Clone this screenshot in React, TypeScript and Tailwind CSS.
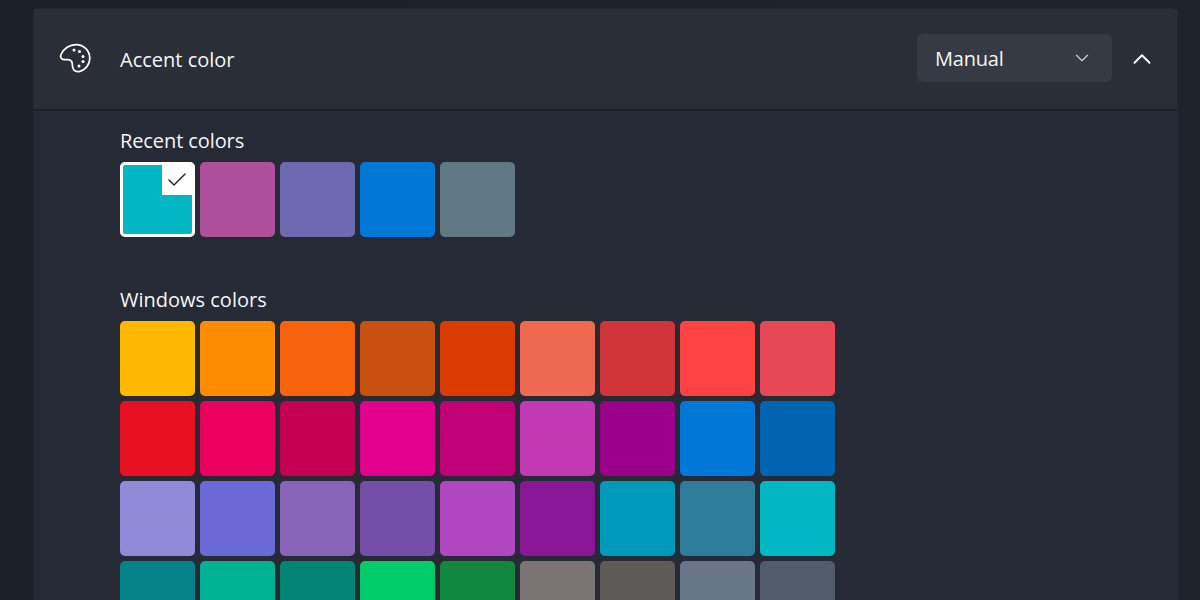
import { Check, ChevronDown, ChevronUp } from "lucide-react";

const recentColors = ["#00b7c3", "#ae4f9b", "#6b69b0", "#0078d7", "#5f7883"];

const windowsColors = [
  "#ffb900", "#ff8c00", "#f7630c", "#ca5010", "#da3b01", "#ef6950", "#d13438", "#ff4343", "#e74856",
  "#e81123", "#ea005e", "#c30052", "#e3008c", "#bf0077", "#c239b3", "#9a0089", "#0078d7", "#0063b1",
  "#8e8cd8", "#6b69d6", "#8764b8", "#744da9", "#b146c2", "#881798", "#0099bc", "#2d7d9a", "#00b7c3",
  "#038387", "#00b294", "#018574", "#00cc6a", "#10893e", "#7a7574", "#5d5a58", "#68768a", "#515c6b",
];

function PaletteIcon() {
  return (
    <svg className="h-8 w-8 text-white" viewBox="0 0 32 32" fill="none" stroke="currentColor" strokeWidth="1.75">
      <path
        d="M17 1.500C10.500 1.500 4.800 5.500 2.200 11c-1.100 2.400-.6 4.600 1.700 5.300 1.700.5 3.600.2 5.300.4 2.700.3 3.800 1.600 4 3.800.2 2.300.1 4.800 1.800 6.600 1.500 1.500 3.800 1.800 5.800 1.300 5.800-1.300 10-7.200 10-13.200C30.800 8 25 1.500 17 1.500Z"
        strokeLinejoin="round"
      />
      <g fill="currentColor" stroke="none">
        <circle cx="15" cy="7" r="1.500" />
        <circle cx="20.500" cy="8.500" r="1.500" />
        <circle cx="24" cy="13.500" r="1.500" />
        <circle cx="24" cy="18.500" r="1.500" />
        <circle cx="20" cy="23" r="1.500" />
      </g>
    </svg>
  );
}

function Swatch({ color }: { color: string }) {
  return <div className="h-[75px] w-[75px] rounded-[5px]" style={{ backgroundColor: color }} />;
}

export default function App() {
  return (
    <div
      className="h-[600px] w-[1200px] overflow-hidden bg-gradient-to-r from-[#1b2029] to-[#1e222b] pl-[33px] pt-2 text-white"
      style={{ fontFamily: '"Open Sans", "Noto Sans", sans-serif' }}
    >
      <div className="h-[640px] w-[1145px] rounded-t-[6px] border border-b-0 border-[#252931] bg-[#262a34]">
        <div className="flex h-[102px] items-center border-b-2 border-[#1c1f26] bg-[#2a2e37] pl-[25px] pr-[20px]">
          <PaletteIcon />
          <span className="ml-[29px] mt-px text-[20px] text-[#f5f6f7]">Accent color</span>
          <div className="mb-[2px] ml-auto flex h-[48px] w-[195px] items-center justify-between rounded-[6px] bg-[#353a43] pl-[18px] pr-[19px]">
            <span className="mt-[2px] text-[20px] tracking-[-0.2px] text-[#f5f6f7]">Manual</span>
            <ChevronDown className="h-[22px] w-[22px] text-[#c4c7cc]" strokeWidth={1.5} />
          </div>
          <ChevronUp className="ml-[15px] h-[30px] w-[30px] text-white" strokeWidth={1.5} />
        </div>

        <div className="pl-[86px]">
          <h3 className="mt-[16px] h-[27px] text-[20px] leading-[27px] tracking-[-0.1px] text-[#f5f6f7]">Recent colors</h3>
          <div className="mt-[8px] flex gap-[5px]">
            <div className="relative h-[75px] w-[75px] overflow-hidden rounded-[5px] border-[3px] border-white bg-[#00b7c3]">
              <div className="absolute right-0 top-0 flex h-[30px] w-[30px] items-center justify-center bg-white">
                <Check className="h-[24px] w-[24px] text-[#2b2b2b]" strokeWidth={1.5} />
              </div>
            </div>
            {recentColors.slice(1).map((color) => (
              <Swatch color={color} key={color} />
            ))}
          </div>

          <h3 className="mt-[49px] h-[27px] text-[20px] leading-[27px] text-[#f5f6f7]">Windows colors</h3>
          <div className="mt-[8px] grid w-[715px] grid-cols-9 gap-[5px]">
            {windowsColors.map((color) => (
              <Swatch color={color} key={color} />
            ))}
          </div>
        </div>
      </div>
    </div>
  );
}
